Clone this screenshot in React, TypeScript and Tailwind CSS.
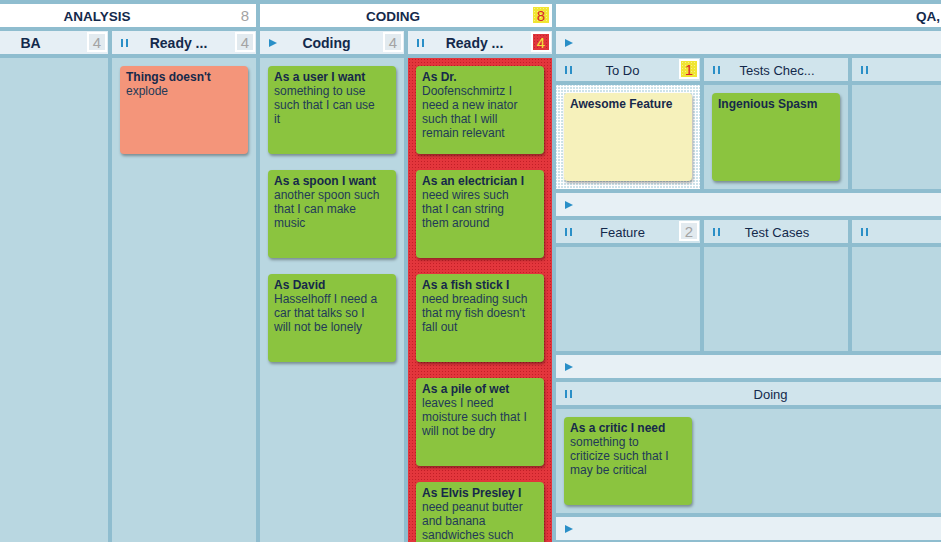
import type { ReactNode } from "react";

type Tone = "green" | "salmon" | "yellow";

type Story = {
  title: string;
  lines: string[];
  tone: Tone;
};

type BadgeTone = "plain" | "gray" | "yellow" | "red";

const toneClass: Record<Tone, string> = {
  green: "bg-[#8bc43f]",
  salmon: "bg-[#f4957a]",
  yellow: "bg-[#f6f1bb]",
};

const badgeClass: Record<BadgeTone, string> = {
  plain: "bg-white text-[#a3a3a3]",
  gray: "bg-[#e2eaef] text-[#a3a3a3]",
  yellow:
    "bg-[#f0e532] bg-[radial-gradient(#f7f08a_0.5px,transparent_0.6px)] bg-size-[3px_3px] text-[#d8262b]",
  red: "bg-[#e1363c] bg-[radial-gradient(#c4242b_0.5px,transparent_0.6px)] bg-size-[3px_3px] text-[#f4e43c]",
};

const readyAnalysis: Story[] = [{ title: "Things doesn't", lines: ["explode"], tone: "salmon" }];

const coding: Story[] = [
  { title: "As a user I want", lines: ["something to use", "such that I can use", "it"], tone: "green" },
  { title: "As a spoon I want", lines: ["another spoon such", "that I can make", "music"], tone: "green" },
  { title: "As David", lines: ["Hasselhoff I need a", "car that talks so I", "will not be lonely"], tone: "green" },
];

const readyCoding: Story[] = [
  { title: "As Dr.", lines: ["Doofenschmirtz I", "need a new inator", "such that I will", "remain relevant"], tone: "green" },
  { title: "As an electrician I", lines: ["need wires such", "that I can string", "them around"], tone: "green" },
  { title: "As a fish stick I", lines: ["need breading such", "that my fish doesn't", "fall out"], tone: "green" },
  { title: "As a pile of wet", lines: ["leaves I need", "moisture such that I", "will not be dry"], tone: "green" },
  { title: "As Elvis Presley I", lines: ["need peanut butter", "and banana", "sandwiches such", "that I can rock"], tone: "green" },
];

function PauseIcon() {
  return (
    <span className="flex gap-[3px]">
      <span className="h-[8px] w-[2px] bg-[#2a8fc7]" />
      <span className="h-[8px] w-[2px] bg-[#2a8fc7]" />
    </span>
  );
}

function PlayIcon() {
  return (
    <svg width="8" height="8" viewBox="0 0 8 8" className="block">
      <path d="M0 0L8 4L0 8Z" fill="#2a8fc7" />
    </svg>
  );
}

function Badge({ value, tone }: { value: number; tone: BadgeTone }) {
  return (
    <span
      className={`absolute right-[1px] top-[1px] flex h-[20px] w-[20px] items-center justify-center border-2 border-white pt-[1px] text-[15px] leading-none ${badgeClass[tone]}`}
    >
      {value}
    </span>
  );
}

function TopHeader({ title, badge }: { title: string; badge?: ReactNode }) {
  return (
    <div className="relative flex h-[23px] shrink-0 items-center justify-center bg-white">
      <span className="pr-[26px] pt-[3px] text-[13.5px] font-bold text-[#13294b]">{title}</span>
      {badge}
    </div>
  );
}

function StoryCard({ story }: { story: Story }) {
  return (
    <div
      className={`h-[88px] w-[128px] shrink-0 overflow-hidden rounded-[4px] px-[6px] pt-[4px] text-[12px] leading-[14px] text-[#223a58] shadow-[1px_2px_3px_rgba(0,0,0,0.35)] ${toneClass[story.tone]}`}
    >
      <div className="whitespace-nowrap font-bold text-[#16294a]">{story.title}</div>
      {story.lines.map((line) => (
        <div key={line} className="whitespace-nowrap">
          {line}
        </div>
      ))}
    </div>
  );
}

function Column({
  title,
  icon,
  badge,
  stories = [],
  bodyClass = "bg-[#b9d7e1]",
}: {
  title: string;
  icon?: ReactNode;
  badge?: ReactNode;
  stories?: Story[];
  bodyClass?: string;
}) {
  return (
    <div className="flex min-h-0 w-[144px] shrink-0 flex-col gap-[4px]">
      <div className="relative flex h-[23px] shrink-0 items-center justify-center bg-[#e6eff5]">
        {icon && <span className="absolute left-[9px] top-[8px]">{icon}</span>}
        <span className="pr-[11px] pt-[2px] text-[14px] font-bold text-[#13294b]">{title}</span>
        {badge}
      </div>
      <div className={`flex min-h-0 flex-1 flex-col gap-[16px] overflow-hidden p-[8px] ${bodyClass}`}>
        {stories.map((story) => (
          <StoryCard key={story.title} story={story} />
        ))}
      </div>
    </div>
  );
}

function Lane({
  title,
  badge,
  stories = [],
  width = "w-[144px]",
  bodyClass = "bg-[#b9d7e1]",
}: {
  title?: string;
  badge?: ReactNode;
  stories?: Story[];
  width?: string;
  bodyClass?: string;
}) {
  return (
    <div className={`flex shrink-0 flex-col gap-[4px] ${width}`}>
      <div className="relative flex h-[23px] shrink-0 items-center justify-center bg-[#d0e4ec]">
        <span className="absolute left-[9px] top-[8px]">
          <PauseIcon />
        </span>
        <span className={`pt-[2px] text-[13px] text-[#13294b] ${badge ? "pr-[11px]" : "pl-[2px]"}`}>{title}</span>
        {badge}
      </div>
      <div className={`flex h-[104px] flex-col gap-[16px] p-[8px] ${bodyClass}`}>
        {stories.map((story) => (
          <StoryCard key={story.title} story={story} />
        ))}
      </div>
    </div>
  );
}

function CollapsedBar() {
  return (
    <div className="flex h-[23px] shrink-0 items-center bg-[#e7f0f5] pl-[9px]">
      <PlayIcon />
    </div>
  );
}

export default function App() {
  return (
    <div className="h-[542px] w-[941px] overflow-hidden bg-[#8fbdcf] font-['Liberation_Sans',Arial,sans-serif]">
      <div className="ml-[-36px] flex h-full gap-[4px] pt-[4px]">
        <section className="flex w-[292px] shrink-0 flex-col gap-[4px]">
          <TopHeader title="ANALYSIS" badge={<Badge value={8} tone="plain" />} />
          <div className="flex min-h-0 flex-1 gap-[4px]">
            <Column title="BA" badge={<Badge value={4} tone="gray" />} />
            <Column
              title="Ready ..."
              icon={<PauseIcon />}
              badge={<Badge value={4} tone="gray" />}
              stories={readyAnalysis}
            />
          </div>
        </section>

        <section className="flex w-[292px] shrink-0 flex-col gap-[4px]">
          <TopHeader title="CODING" badge={<Badge value={8} tone="yellow" />} />
          <div className="flex min-h-0 flex-1 gap-[4px]">
            <Column title="Coding" icon={<PlayIcon />} badge={<Badge value={4} tone="gray" />} stories={coding} />
            <Column
              title="Ready ..."
              icon={<PauseIcon />}
              badge={<Badge value={4} tone="red" />}
              stories={readyCoding}
              bodyClass="bg-[#e3363c] bg-[radial-gradient(#c21f27_0.7px,transparent_0.8px)] bg-size-[3px_3px]"
            />
          </div>
        </section>

        <section className="flex w-[440px] shrink-0 flex-col gap-[4px]">
          <div className="flex h-[23px] shrink-0 items-center bg-white pl-[360px]">
            <span className="whitespace-nowrap pt-[3px] text-[13.5px] font-bold text-[#13294b]">QA, Testing &amp; Release</span>
          </div>
          <CollapsedBar />
          <div className="flex gap-[4px]">
            <Lane
              title="To Do"
              badge={<Badge value={1} tone="yellow" />}
              stories={[{ title: "Awesome Feature", lines: [], tone: "yellow" }]}
              bodyClass="bg-[#cde2ea] bg-[radial-gradient(#ffffff_1px,transparent_1.1px)] bg-size-[3px_3px]"
            />
            <Lane title="Tests Chec..." stories={[{ title: "Ingenious Spasm", lines: [], tone: "green" }]} />
            <Lane />
          </div>
          <CollapsedBar />
          <div className="flex gap-[4px]">
            <Lane title="Feature" badge={<Badge value={2} tone="gray" />} />
            <Lane title="Test Cases" />
            <Lane />
          </div>
          <CollapsedBar />
          <Lane
            title="Doing"
            width="w-[440px]"
            badge={<Badge value={1} tone="gray" />}
            stories={[
              {
                title: "As a critic I need",
                lines: ["something to", "criticize such that I", "may be critical"],
                tone: "green",
              },
            ]}
          />
          <CollapsedBar />
        </section>
      </div>
    </div>
  );
}
